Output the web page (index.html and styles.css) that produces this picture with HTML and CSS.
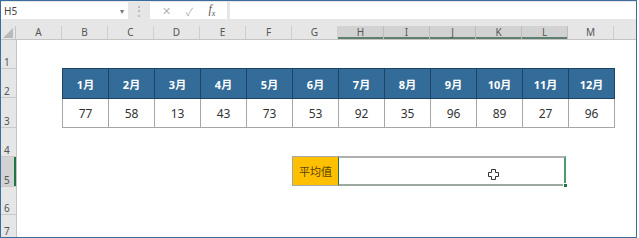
FILE: index.html
```html
<!DOCTYPE html>
<html lang="zh-CN">
<head>
  <meta charset="UTF-8" />
  <title>平均值</title>
  <link rel="stylesheet" href="styles.css">
</head>
<body>
  <div id="window">
    <div id="formula-bar">
      <div class="name-box"><span>H5</span><span class="arrow">▾</span></div>
      <div class="grip">⋮</div>
      <div class="fx-box">
        <span class="cancel">✕</span>
        <span class="enter">✓</span>
        <span class="fx">f<sub>x</sub></span>
      </div>
      <div class="formula-input"></div>
    </div>

    <div id="col-heads">
      <div class="corner">
        <svg width="10" height="10" viewBox="0 0 10 10"><polygon points="10,0 10,10 0,10" fill="#b9b9b9"/></svg>
      </div>
      <div class="col-head">A</div>
      <div class="col-head">B</div>
      <div class="col-head">C</div>
      <div class="col-head">D</div>
      <div class="col-head">E</div>
      <div class="col-head">F</div>
      <div class="col-head">G</div>
      <div class="col-head sel">H</div>
      <div class="col-head sel">I</div>
      <div class="col-head sel">J</div>
      <div class="col-head sel">K</div>
      <div class="col-head sel">L</div>
      <div class="col-head">M</div>
      <div class="col-fill"></div>
    </div>

    <div id="sheet">
      <div id="row-heads">
        <div class="row-head r1">1</div>
        <div class="row-head r2">2</div>
        <div class="row-head r3">3</div>
        <div class="row-head r4">4</div>
        <div class="row-head r5 sel">5</div>
        <div class="row-head r6">6</div>
        <div class="row-head r7">7</div>
      </div>

      <div id="cells">
        <div class="blank-row"></div>
        <table id="months">
          <tr>
            <th>1月</th><th>2月</th><th>3月</th><th>4月</th><th>5月</th><th>6月</th>
            <th>7月</th><th>8月</th><th>9月</th><th>10月</th><th>11月</th><th>12月</th>
          </tr>
          <tr>
            <td>77</td><td>58</td><td>13</td><td>43</td><td>73</td><td>53</td>
            <td>92</td><td>35</td><td>96</td><td>89</td><td>27</td><td>96</td>
          </tr>
        </table>
        <div class="gap-row"></div>
        <div class="avg-row">
          <div class="avg-label">平均值</div>
          <div class="avg-value">
            <svg class="cursor" width="11" height="11" viewBox="0 0 11 11">
              <path d="M3.5 0.5h4v3h3v4h-3v3h-4v-3h-3v-4h3z" fill="#fff" stroke="#333" stroke-width="1"/>
            </svg>
            <div class="handle"></div>
          </div>
        </div>
      </div>
    </div>
  </div>
</body>
</html>
```

FILE: styles.css
```css
body {
  margin: 0;
  background: #fff;
  font-family: "Noto Sans", "Noto Sans CJK SC", sans-serif;
}
#window {
  width: 635px;
  height: 236px;
  border: 1px solid #3a6c9c;
  display: flex;
  flex-direction: column;
  overflow: hidden;
  background: #fff;
}
#formula-bar {
  height: 25px;
  background: #e6e6e6;
  display: flex;
  align-items: flex-start;
  padding-top: 1px;
  box-sizing: border-box;
}
.name-box {
  width: 127px;
  height: 17px;
  background: #fff;
  display: flex;
  align-items: center;
  justify-content: space-between;
  padding: 0 4px 0 3px;
  box-sizing: border-box;
  font-size: 10px;
  color: #444;
}
.name-box .arrow {
  font-size: 8px;
  color: #777;
}
.grip {
  width: 22px;
  text-align: center;
  font-size: 12px;
  line-height: 17px;
  color: #aaa;
}
.fx-box {
  width: 77px;
  height: 17px;
  background: #fff;
  display: flex;
  align-items: center;
  justify-content: space-around;
  padding: 0 4px;
  box-sizing: border-box;
  color: #b5b5b5;
  font-size: 11px;
}
.fx-box .fx {
  font-family: "Liberation Serif", serif;
  font-style: italic;
  color: #555;
  font-size: 12px;
}
.fx-box .fx sub {
  font-size: 8px;
}
.formula-input {
  flex: 1;
  height: 17px;
  margin-left: 3px;
  background: #fff;
}
#col-heads {
  display: flex;
  height: 13px;
  background: #e6e6e6;
  border-bottom: 1px solid #c4c4c4;
}
.corner {
  width: 15px;
  display: flex;
  align-items: flex-end;
  justify-content: flex-end;
  padding: 0 2px 1px 0;
  box-sizing: border-box;
  border-right: 1px solid #c4c4c4;
}
.col-head {
  width: 45px;
  border-right: 1px solid #cfcfcf;
  text-align: center;
  font-size: 10px;
  line-height: 13px;
  color: #555;
}
.col-head.sel {
  background: #d2d2d2;
  border-right-color: #bdbdbd;
  box-shadow: inset 0 -2px 0 #5f7f6f;
}
.col-fill {
  flex: 1;
}
#sheet {
  display: flex;
  flex: 1;
}
#row-heads {
  width: 15px;
  background: #e6e6e6;
  border-right: 1px solid #c4c4c4;
  display: flex;
  flex-direction: column;
}
.row-head {
  border-bottom: 1px solid #c9c9c9;
  font-size: 10px;
  color: #555;
  padding-left: 3px;
  display: flex;
  align-items: flex-end;
  line-height: 12px;
}
.r1 { height: 28px; }
.r2 { height: 28px; }
.r3 { height: 29px; }
.r4 { height: 28px; }
.r5 { height: 29px; }
.r6 { height: 27px; }
.r7 { flex: 1; border-bottom: none; }
.row-head.sel {
  background: #d2d2d2;
  box-shadow: inset -2px 0 0 #217346;
}
#cells {
  flex: 1;
  display: flex;
  flex-direction: column;
}
.blank-row {
  height: 28px;
}
#months {
  border-collapse: collapse;
  margin-left: 45px;
  table-layout: fixed;
  width: 553px;
  border: 1px solid #a6a6a6;
  font-size: 11px;
}
#months th {
  height: 29px;
  padding: 0;
  background: #336c98;
  color: #fff;
  font-weight: bold;
  border: 1px solid #1f4364;
}
#months td {
  height: 28px;
  padding: 0;
  text-align: center;
  color: #333;
  font-size: 12px;
  border: 1px solid #a6a6a6;
}
.gap-row {
  height: 28px;
}
.avg-row {
  display: flex;
  margin-left: 275px;
  height: 30px;
}
.avg-label {
  width: 45px;
  background: #ffc000;
  border: 1px solid #a8a8a8;
  border-right: none;
  display: flex;
  align-items: center;
  justify-content: center;
  font-size: 11px;
  color: #5a4200;
}
.avg-value {
  position: relative;
  width: 228px;
  background: #fff;
  border-top: 2px solid #b0b0b0;
  border-bottom: 2px solid #9aa89f;
  border-left: 1px solid #217346;
  border-right: 2px solid #4f9a6c;
  box-sizing: border-box;
}
.cursor {
  position: absolute;
  left: 149px;
  top: 11px;
}
.handle {
  position: absolute;
  right: -4px;
  bottom: -4px;
  width: 5px;
  height: 5px;
  background: #217346;
  border: 1px solid #fff;
  box-sizing: border-box;
}
```
